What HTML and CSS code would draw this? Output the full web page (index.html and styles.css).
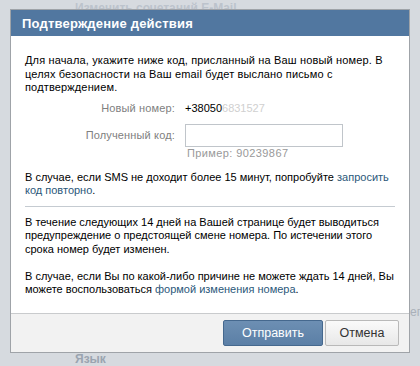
FILE: index.html
```html
<!DOCTYPE html>
<html lang="ru">
<head>
    <meta charset="UTF-8">
    <title>Подтверждение действия</title>
    <link rel="stylesheet" href="styles.css">
</head>
<body>

    <div class="page-bg">
        <div class="bg-top">Изменить сочетаний E-Mail</div>
        <div class="bg-right">ег</div>
        <div class="bg-bottom">Язык</div>
    </div>

    <div class="dialog">
        <div class="dialog-title">Подтверждение действия</div>

        <div class="dialog-body">
            <p class="intro">Для начала, укажите ниже код, присланный на Ваш новый номер. В целях безопасности на Ваш email будет выслано письмо с подтверждением.</p>

            <div class="form-row">
                <span class="form-label">Новый номер:</span>
                <span class="form-value">+38050<span class="blurred">6831527</span></span>
            </div>
            <div class="form-row form-row-code">
                <span class="form-label label-code">Полученный код:</span>
                <div class="form-field">
                    <input type="text" class="code-input">
                    <div class="hint">Пример: 90239867</div>
                </div>
            </div>

            <p class="note">В случае, если SMS не доходит более 15 минут, попробуйте <a href="#">запросить код повторно</a>.</p>

            <div class="separator"></div>

            <p class="para">В течение следующих 14 дней на Вашей странице будет выводиться предупреждение о предстоящей смене номера. По истечении этого срока номер будет изменен.</p>
            <p class="para">В случае, если Вы по какой-либо причине не можете ждать 14 дней, Вы можете воспользоваться <a href="#">формой изменения номера</a>.</p>
        </div>

        <div class="dialog-footer">
            <button class="btn btn-blue">Отправить</button>
            <button class="btn btn-gray">Отмена</button>
        </div>
    </div>

</body>
</html>
```

FILE: styles.css
```css
/* reset */
* {
    margin: 0;
    padding: 0;
    box-sizing: border-box;
}

body {
    font-family: "Liberation Sans", Arial, sans-serif;
    font-size: 11px;
    color: #000;
    background-color: #d6dadf;
    height: 366px;
    overflow: hidden;
    position: relative;
}

/* faded page behind the dialog */
.page-bg {
    position: absolute;
    top: 0;
    left: 0;
    right: 0;
    bottom: 0;
}

.bg-top {
    position: absolute;
    top: 1px;
    left: 75px;
    font-weight: bold;
    font-size: 12px;
    color: #bcc3cc;
}

.bg-right {
    position: absolute;
    top: 305px;
    left: 410px;
    font-size: 12px;
    color: #a9b0b9;
}

.bg-bottom {
    position: absolute;
    top: 352px;
    left: 75px;
    font-weight: bold;
    font-size: 12px;
    color: #9aa4b0;
}

/* dialog box */
.dialog {
    position: relative;
    margin: 9px 0 0 10px;
    width: 400px;
    background: #fff;
    border: 1px solid #9fa3a8;
}

.dialog-title {
    height: 26px;
    line-height: 27px;
    padding-left: 11px;
    background-color: #5177a0;
    color: #fff;
    font-weight: bold;
    font-size: 13px;
    letter-spacing: 0.2px;
}

.dialog-body {
    padding: 18px 14px 16px 14px;
    line-height: 13.5px;
}

.intro {
    margin-bottom: 3px;
    letter-spacing: 0.15px;
}

.form-row {
    display: flex;
    align-items: flex-start;
}

.form-row-code {
    margin-top: 6px;
}

.form-label {
    width: 160px;
    text-align: right;
    color: #808080;
    padding-right: 10px;
    line-height: 20px;
    letter-spacing: 0.15px;
}

.label-code {
    line-height: 23px;
}

.form-value {
    line-height: 20px;
}

.blurred {
    color: #d0d0d0;
}

.form-field {
    display: flex;
    flex-direction: column;
}

.code-input {
    width: 158px;
    height: 23px;
    border: 1px solid #c0c5ca;
}

.hint {
    font-size: 11px;
    line-height: 13px;
    color: #999;
    padding-left: 2px;
    letter-spacing: 0.4px;
}

.note {
    margin-top: 11px;
}

a {
    color: #2b587a;
    text-decoration: none;
}

.separator {
    border-top: 1px solid #c5cbd1;
    margin: 8px 0 9px 0;
}

.para {
    margin-bottom: 13.5px;
}

.para:last-child {
    margin-bottom: 0;
}

/* footer with buttons */
.dialog-footer {
    display: flex;
    justify-content: flex-end;
    gap: 2px;
    padding: 6px 10px 6px 10px;
    background-color: #f2f2f2;
    border-top: 1px solid #c9cbcd;
}

.btn {
    height: 26px;
    font-family: "Liberation Sans", Arial, sans-serif;
    font-size: 12.5px;
    border-radius: 2px;
    cursor: pointer;
}

.btn-blue {
    width: 100px;
    background: linear-gradient(#6d8fb3, #5b7fa6);
    border: 1px solid #45688e;
    color: #fff;
}

.btn-gray {
    width: 74px;
    background: linear-gradient(#fafafa, #e8e8e8);
    border: 1px solid #b9b9b9;
    color: #333;
}
```
